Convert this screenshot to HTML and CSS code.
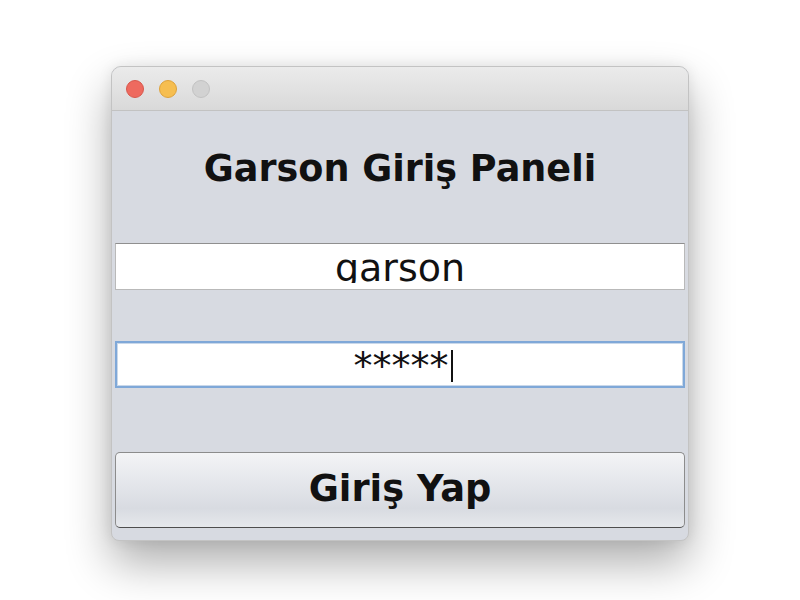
FILE: index.html
```html
<!DOCTYPE html>
<html lang="tr">
<head>
<meta charset="utf-8">
<title>Garson Giriş Paneli</title>
<link rel="stylesheet" href="styles.css">
</head>
<body>
<div class="stage">
  <div class="window">
    <div class="titlebar">
      <span class="light red"></span>
      <span class="light yellow"></span>
      <span class="light gray"></span>
    </div>
    <div class="content">
      <h1 class="heading">Garson Giriş Paneli</h1>
      <div class="field"><span class="clip">garson</span></div>
      <div class="field focused"><span class="value">*****</span><span class="caret"></span></div>
      <button class="btn" type="button">Giriş Yap</button>
    </div>
  </div>
</div>
</body>
</html>
```

FILE: styles.css
```css
html, body {
  margin: 0;
  padding: 0;
  background: #ffffff;
}
.stage {
  width: 800px;
  height: 600px;
  display: flex;
  justify-content: center;
  padding-top: 66px;
  box-sizing: border-box;
  font-family: "DejaVu Sans", "Liberation Sans", sans-serif;
}
.window {
  width: 578px;
  height: 475px;
  box-sizing: border-box;
  border: 1px solid #c3c3c3;
  border-radius: 10px 10px 8px 8px;
  overflow: hidden;
  background: #d7dae1;
  box-shadow: 0 22px 45px rgba(0, 0, 0, 0.32), 0 0 14px rgba(0, 0, 0, 0.08);
  display: flex;
  flex-direction: column;
}
.titlebar {
  height: 44px;
  flex: none;
  box-sizing: border-box;
  border-bottom: 1px solid #c2c2c2;
  background: linear-gradient(#ebebeb, #d9d9d9);
  display: flex;
  align-items: center;
  gap: 15px;
  padding-left: 14px;
}
.light {
  width: 18px;
  height: 18px;
  border-radius: 50%;
  box-sizing: border-box;
}
.red { background: #ee6a5f; border: 1px solid #d8574c; }
.yellow { background: #f6be50; border: 1px solid #dea23a; }
.gray { background: #d2d2d2; border: 1px solid #c2c2c2; }
.content {
  flex: 1;
  display: flex;
  flex-direction: column;
  padding: 38px 3px 12px 3px;
}
.heading {
  margin: 0 0 54px 0;
  font-size: 36.6px;
  line-height: 40px;
  font-weight: bold;
  text-align: center;
  color: #111111;
}
.field {
  height: 47px;
  box-sizing: border-box;
  background: #ffffff;
  border: 1px solid #b9b9b9;
  border-top-color: #8f8f8f;
  text-align: center;
  padding-top: 5px;
  font-size: 38px;
  line-height: 38px;
  color: #111111;
}
.clip {
  display: inline-block;
  vertical-align: top;
  height: 34px;
  overflow: hidden;
}
.field.focused {
  margin-top: 51px;
  border: 2px solid #7fa8d8;
  box-shadow: inset 0 0 0 1px #c9d8ea;
  padding-top: 4px;
  padding-left: 6px;
}
.value {
  vertical-align: baseline;
}
.caret {
  display: inline-block;
  width: 2px;
  height: 32px;
  margin-left: 2px;
  background: #111111;
  vertical-align: -3px;
}
.btn {
  margin-top: 64px;
  height: 76px;
  width: 100%;
  box-sizing: border-box;
  border: 1px solid #8c8c8c;
  border-bottom-color: #4e4e4e;
  border-radius: 5px;
  background: linear-gradient(#f3f4f6 0%, #e3e5ea 45%, #d8dbe1 75%, #e6e8ec 100%);
  font-family: "DejaVu Sans", "Liberation Sans", sans-serif;
  font-size: 36.8px;
  font-weight: bold;
  color: #111111;
  padding: 0;
  padding-bottom: 3px;
}
```
